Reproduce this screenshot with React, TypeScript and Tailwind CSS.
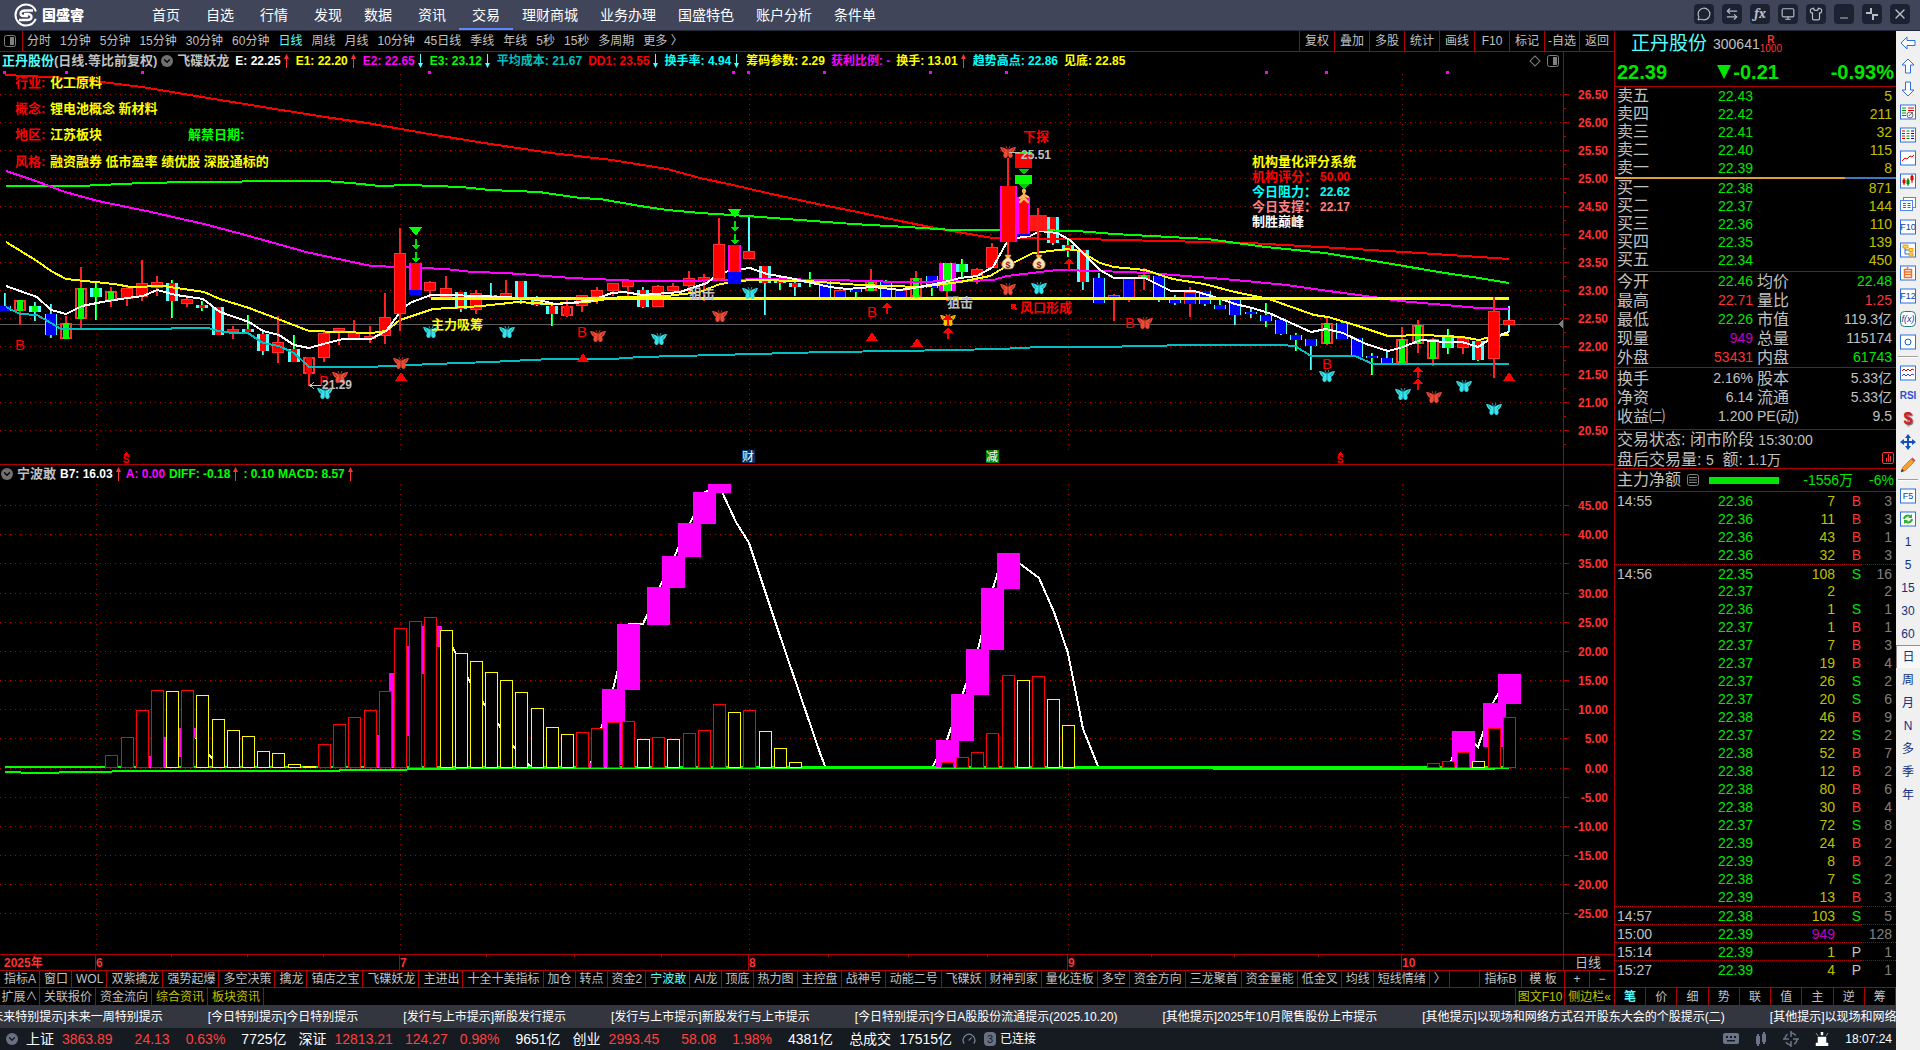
import { Fragment, ReactNode } from 'react';
import {
  ArrowLeftRight,
  ChevronDown,
  Gauge,
  MessageCircle,
  Minus,
  Monitor,
  Shirt,
  X,
} from 'lucide-react';

const navGroups = [
  ['首页', '自选', '行情', '发现'],
  ['数据', '资讯', '交易'],
  ['理财商城', '业务办理', '国盛特色', '账户分析', '条件单'],
];

const periods = [
  '分时', '1分钟', '5分钟', '15分钟', '30分钟', '60分钟', '日线', '周线', '月线', '10分钟',
  '45日线', '季线', '年线', '5秒', '15秒', '多周期', '更多 〉',
];

const chartTools = ['复权', '叠加', '多股', '统计', '画线', 'F10', '标记', '-自选', '返回'];

type Reading = { text: string; color: string; arrow?: 'up' | 'down' };

const mainReadings: Reading[] = [
  { text: 'E: 22.25', color: 'text-white', arrow: 'up' },
  { text: 'E1: 22.20', color: 'text-[#ffff00]', arrow: 'up' },
  { text: 'E2: 22.65', color: 'text-[#ff00ff]', arrow: 'down' },
  { text: 'E3: 23.12', color: 'text-[#00ff00]', arrow: 'down' },
  { text: '平均成本: 21.67', color: 'text-[#00c0c0]' },
  { text: 'DD1: 23.55', color: 'text-[#ff0000]', arrow: 'down' },
  { text: '换手率: 4.94', color: 'text-[#00ffff]', arrow: 'down' },
  { text: '筹码参数: 2.29', color: 'text-[#ffff00]' },
  { text: '获利比例: -', color: 'text-[#ff00ff]' },
  { text: '换手: 13.01', color: 'text-[#ffff00]', arrow: 'up' },
  { text: '趋势高点: 22.86', color: 'text-[#00ffff]' },
  { text: '见底: 22.85', color: 'text-[#ffff00]' },
];

const subReadings: Reading[] = [
  { text: 'B7: 16.03', color: 'text-white', arrow: 'up' },
  { text: 'A: 0.00', color: 'text-[#ff00ff]' },
  { text: 'DIFF: -0.18', color: 'text-[#00ff00]', arrow: 'up' },
  { text: ': 0.10', color: 'text-[#00ff00]' },
  { text: 'MACD: 8.57', color: 'text-[#00ff00]', arrow: 'up' },
];

// kind, high, low, body top, body bottom
type Candle = [string, number, number, number, number];

const candles: Candle[] = [
  ['cb', 293, 311, 306, 311], ['rg', 300, 325, 300, 311], ['cg', 302, 321, 306, 312], ['cb', 304, 338, 314, 335],
  ['rg', 316, 339, 323, 339], ['rg', 267, 328, 288, 319], ['cg', 283, 320, 288, 297], ['rg', 287, 307, 291, 301],
  ['r', 287, 306, 288, 299], ['r', 260, 301, 283, 297], ['r', 276, 296, 282, 288], ['c', 280, 318, 283, 301],
  ['r', 295, 307, 299, 304], ['c', 301, 311, 305, 308], ['c', 307, 335, 307, 335], ['r', 326, 339, 329, 332],
  ['c', 315, 333, 329, 332], ['c', 331, 355, 334, 351], ['r', 316, 363, 342, 353], ['c', 335, 362, 349, 362],
  ['rr', 357, 386, 357, 374], ['r', 330, 362, 333, 358], ['r', 328, 345, 328, 331], ['r', 320, 340, 332, 340],
  ['r', 326, 343, 336, 339], ['r', 293, 344, 317, 336], ['r', 228, 331, 253, 314], ['m', 263, 295, 263, 290],
  ['r', 281, 298, 282, 291], ['r', 276, 298, 288, 297], ['c', 292, 312, 292, 309], ['r', 290, 314, 293, 310],
  ['c', 283, 298, 295, 298], ['r', 280, 299, 293, 299], ['c', 281, 304, 281, 299], ['c', 296, 306, 297, 305],
  ['c', 302, 326, 306, 314], ['rr', 300, 317, 306, 316], ['r', 295, 312, 295, 306], ['r', 287, 304, 290, 297],
  ['r', 283, 296, 283, 291], ['r', 280, 297, 280, 287], ['c', 287, 308, 290, 307], ['r', 285, 307, 286, 307],
  ['r', 283, 292, 286, 291], ['r', 271, 292, 278, 286], ['r', 274, 301, 277, 281], ['r', 218, 281, 244, 279],
  ['m', 245, 284, 245, 272], ['t', 216, 259, 251, 259], ['c', 266, 315, 266, 283], ['c', 276, 290, 280, 283],
  ['c', 281, 296, 283, 287], ['c', 272, 287, 281, 283], ['cb', 280, 297, 280, 297], ['rb', 287, 300, 290, 297],
  ['cb', 288, 297, 289, 292], ['rg', 269, 291, 281, 291], ['cb', 280, 300, 281, 297], ['rb', 289, 297, 290, 297],
  ['rg', 271, 297, 278, 297], ['cb', 276, 296, 276, 288], ['my', 263, 301, 263, 291], ['cg', 259, 279, 264, 272],
  ['r', 268, 284, 269, 276], ['r', 243, 268, 247, 268], ['mw', 158, 255, 186, 242], ['m', 197, 236, 197, 234],
  ['rw', 208, 255, 215, 231], ['c', 217, 245, 217, 243], ['c', 240, 257, 245, 251], ['c', 250, 290, 250, 282],
  ['cb', 273, 303, 278, 303], ['rb', 294, 321, 295, 300], ['rb', 278, 302, 278, 299], ['rg', 268, 290, 275, 279],
  ['cb', 275, 302, 276, 299], ['cb', 295, 305, 299, 303], ['rb', 287, 317, 292, 304], ['cb', 291, 306, 291, 304],
  ['cb', 298, 309, 305, 309], ['cb', 300, 325, 300, 315], ['cb', 309, 318, 312, 314], ['cb', 303, 327, 315, 321],
  ['cb', 318, 335, 320, 334], ['cb', 333, 351, 335, 340], ['cb', 339, 370, 339, 346], ['rg', 318, 345, 323, 344],
  ['cb', 322, 339, 323, 339], ['cb', 338, 357, 338, 357], ['cb', 353, 375, 356, 358], ['cb', 352, 364, 358, 363],
  ['rg', 327, 363, 339, 363], ['rg', 320, 353, 325, 344], ['rg', 338, 366, 339, 359], ['cg', 329, 354, 335, 348],
  ['r', 336, 354, 338, 348], ['c', 341, 361, 341, 360], ['r', 297, 378, 311, 359], ['t', 306, 332, 320, 325],
];

const barX = (n: number) => Math.round(5 + n * 15.19);

const averages = [
  { color: '#00c0c0', points: '6,307 20,314 37,315 51,323 61,329 167,329 176,328 208,328 218,331 233,333 248,333 263,343 279,346 294,353 309,367 367,367 433,364 490,362 551,359 612,359 640,357 717,355 827,352 900,351 1000,349 1040,347 1100,347 1190,345 1280,345 1295,346 1311,356 1355,356 1373,364 1462,364 1509,364' },
  { color: '#ff0000', points: '5,75 70,78 142,87 202,97 269,108 325,117 367,123 429,134 484,143 551,153 612,160 667,169 700,178 733,185 767,193 813,203 867,214 900,221 940,229 993,238 1080,239 1163,241 1249,243 1338,248 1404,252 1509,259' },
  { color: '#00ff00', points: '6,186 80,186 143,183 192,182 294,181 324,181 351,183 380,186 408,185 461,187 490,190 539,192 580,198 600,199 640,206 667,210 700,213 747,216 800,220 853,224 907,227 953,230 1033,230 1077,231 1114,234 1207,239 1266,247 1325,253 1380,262 1445,273 1479,278 1509,283' },
  { color: '#ff00ff', points: '6,171 33,180 65,192 98,201 151,212 204,224 249,236 306,252 371,266 400,267 445,269 473,272 506,273 571,278 640,281 680,281 767,279 833,280 900,282 967,281 993,280 1007,276 1057,270 1100,271 1149,273 1235,280 1287,285 1314,289 1373,297 1400,301 1479,308 1509,309' },
  { color: '#ffff00', points: '6,242 37,261 51,271 66,279 114,284 131,287 163,286 204,292 220,299 249,308 278,319 309,331 371,333 386,331 400,320 433,309 482,306 518,302 551,304 588,302 620,297 667,296 700,292 720,284 750,280 807,281 860,285 920,287 960,282 990,276 1005,267 1033,253 1067,249 1080,251 1100,263 1114,267 1145,270 1173,279 1204,284 1235,292 1269,299 1314,315 1328,317 1355,325 1388,336 1424,335 1462,337 1479,340 1493,336 1509,335' },
  { color: '#ffffff', points: '6,286 20,291 37,297 51,310 66,314 82,306 102,302 127,298 143,296 157,290 176,295 203,299 220,312 249,322 263,331 279,335 294,345 309,348 327,343 343,339 371,339 386,331 404,307 412,302 431,295 449,295 506,297 539,300 555,304 571,303 592,300 612,293 624,292 643,295 680,292 707,283 713,278 728,271 750,268 767,274 790,278 830,287 847,289 873,287 900,290 913,288 940,283 960,278 977,276 993,267 1007,242 1017,238 1030,236 1040,231 1057,233 1070,240 1100,270 1114,278 1145,278 1171,291 1194,291 1218,298 1235,304 1252,308 1269,313 1311,332 1326,329 1343,333 1366,344 1388,351 1400,348 1421,340 1445,342 1462,342 1478,347 1493,337 1509,332' },
];

const butterflies = [
  ['#35e3ec', 431, 332], ['#35e3ec', 507, 332], ['#35e3ec', 325, 393], ['#35e3ec', 659, 339], ['#35e3ec', 750, 293],
  ['#35e3ec', 1039, 288], ['#35e3ec', 1327, 376], ['#35e3ec', 1403, 394], ['#35e3ec', 1464, 386], ['#35e3ec', 1494, 409],
  ['#f04a35', 340, 377], ['#f04a35', 401, 363], ['#f04a35', 598, 336], ['#f04a35', 720, 316], ['#f04a35', 1008, 289],
  ['#f04a35', 1145, 323], ['#f04a35', 1434, 397], ['#f04a35', 1008, 152], ['#ffc400', 948, 320],
] as const;

const notes = [
  { x: 15, y: 87, tag: '行业:', text: '化工原料' },
  { x: 15, y: 113, tag: '概念:', text: '锂电池概念 新材料' },
  { x: 15, y: 139, tag: '地区:', text: '江苏板块' },
  { x: 15, y: 166, tag: '风格:', text: '融资融券 低市盈率 绩优股 深股通标的' },
];

const scores = [
  { y: 166, label: '机构量化评分系统', value: '', color: '#ffff00' },
  { y: 181, label: '机构评分：', value: '50.00', color: '#ff0000' },
  { y: 196, label: '今日阻力：', value: '22.62', color: '#00ffff' },
  { y: 211, label: '今日支撑：', value: '22.17', color: '#ff8080' },
  { y: 226, label: '制胜巅峰', value: '', color: '#ffffff' },
];

// bar index, colour, top
const macdBars: [number, 'r' | 'y', number][] = [
  [7, 'r', 755], [8, 'r', 737], [9, 'r', 710], [10, 'r', 690], [11, 'y', 691], [12, 'r', 690], [13, 'y', 695],
  [14, 'y', 719], [15, 'y', 730], [16, 'y', 736], [17, 'y', 751], [18, 'y', 753], [19, 'y', 764], [20, 'y', 766],
  [21, 'r', 744], [22, 'r', 724], [23, 'r', 717], [24, 'r', 710], [25, 'r', 691], [26, 'r', 628], [27, 'r', 621],
  [28, 'r', 617], [29, 'y', 630], [30, 'y', 653], [31, 'y', 661], [32, 'y', 672], [33, 'y', 680], [34, 'y', 692],
  [35, 'y', 708], [36, 'y', 727], [37, 'y', 734], [38, 'r', 732], [39, 'r', 728], [40, 'r', 722], [41, 'r', 721],
  [42, 'y', 739], [43, 'r', 737], [44, 'y', 739], [45, 'r', 733], [46, 'r', 730], [47, 'r', 704], [48, 'y', 712],
  [49, 'r', 710], [50, 'y', 731], [51, 'y', 748], [52, 'y', 762], [62, 'r', 762], [63, 'r', 757], [64, 'r', 752],
  [65, 'r', 733], [66, 'r', 675], [67, 'y', 680], [68, 'r', 676], [69, 'y', 699], [70, 'y', 725], [94, 'r', 763],
  [95, 'r', 761], [96, 'r', 752], [97, 'y', 761], [98, 'r', 728], [99, 'r', 717],
];

// bar index, top, bottom
const surges = [
  [10, 756, 767], [11, 737, 757], [12, 728, 738], [25, 735, 767], [26, 673, 736], [27, 646, 674], [28, 626, 647],
  [39, 763, 767], [40, 689, 765], [41, 624, 690], [43, 587, 625], [44, 556, 588], [45, 523, 557], [46, 492, 524],
  [47, 484, 493], [62, 740, 767], [63, 694, 741], [64, 649, 695], [65, 588, 650], [66, 553, 589], [96, 731, 767],
  [98, 703, 747], [99, 674, 704],
];

const surgeLines = [
  '182,728 196,738 211,757 218,766',
  '430,626 438,627 453,648 469,680 484,704 499,725 514,747 530,766',
  '590,766 613,689 629,624 643,624 660,586 675,555 690,523 705,492 715,487 722,492 736,522 749,543 779,633 820,753 825,766',
  '933,766 947,740 963,693 978,649 993,588 1003,556 1019,563 1039,578 1054,612 1068,653 1083,729 1098,766',
  '1449,766 1463,732 1478,747 1493,703 1509,674',
];

const months = [
  { label: '6', x: 96 }, { label: '7', x: 400 }, { label: '8', x: 749 }, { label: '9', x: 1068 }, { label: '10', x: 1402 },
];

const indicatorTabs = [
  '指标A', '窗口', 'WOL', '双紫擒龙', '强势起爆', '多空决策', '擒龙', '镇店之宝', '飞碟妖龙', '主进出',
  '十全十美指标', '加仓', '转点', '资金2', '宁波敢', 'AI龙', '顶底', '热力图', '主控盘', '战神号', '动能二号',
  '飞碟妖', '财神到家', '量化连板', '多空', '资金方向', '三龙聚首', '资金量能', '低金叉', '均线', '短线情绪', '〉',
];

const sells = [['卖五', '22.43', '5'], ['卖四', '22.42', '211'], ['卖三', '22.41', '32'], ['卖二', '22.40', '115'], ['卖一', '22.39', '8']];
const buys = [['买一', '22.38', '871'], ['买二', '22.37', '144'], ['买三', '22.36', '110'], ['买四', '22.35', '139'], ['买五', '22.34', '450']];

const GREEN = 'text-[#00e600]';
const RED = 'text-[#ff3232]';
const GRAY = 'text-[#c0c0c0]';

const summary = [
  ['今开', '22.46', GREEN, '均价', '22.48', GREEN],
  ['最高', '22.71', RED, '量比', '1.25', RED],
  ['最低', '22.26', GREEN, '市值', '119.3亿', GRAY],
  ['现量', '949', 'text-[#c000c0]', '总量', '115174', GRAY],
  ['外盘', '53431', RED, '内盘', '61743', GREEN],
];

const capital = [
  ['换手', '2.16%', GRAY, '股本', '5.33亿', GRAY],
  ['净资', '6.14', GRAY, '流通', '5.33亿', GRAY],
  ['收益㈡', '1.200', GRAY, 'PE(动)', '9.5', GRAY],
];

const ticks = [
  ['14:55', '22.36', '7', 'B', '3'], ['', '22.36', '11', 'B', '3'], ['', '22.36', '43', 'B', '1'], ['', '22.36', '32', 'B', '3'],
  ['14:56', '22.35', '108', 'S', '16'], ['', '22.37', '2', '', '2'], ['', '22.36', '1', 'S', '1'], ['', '22.37', '1', 'B', '1'],
  ['', '22.37', '7', 'B', '3'], ['', '22.37', '19', 'B', '4'], ['', '22.37', '26', 'S', '2'], ['', '22.37', '20', 'S', '6'],
  ['', '22.38', '46', 'B', '9'], ['', '22.37', '22', 'S', '2'], ['', '22.38', '52', 'B', '7'], ['', '22.38', '12', 'B', '2'],
  ['', '22.38', '80', 'B', '6'], ['', '22.38', '30', 'B', '4'], ['', '22.37', '72', 'S', '8'], ['', '22.39', '24', 'B', '2'],
  ['', '22.39', '8', 'B', '2'], ['', '22.38', '7', 'S', '2'], ['', '22.39', '13', 'B', '3'], ['14:57', '22.38', '103', 'S', '5'],
  ['15:00', '22.39', '949', '', '128'], ['15:14', '22.39', '1', 'P', '1'], ['15:27', '22.39', '4', 'P', '1'],
];

const tickTabs = ['笔', '价', '细', '势', '联', '值', '主', '逆', '筹'];

const headlines = [
  '[未来特别提示]未来一周特别提示',
  '[今日特别提示]今日特别提示',
  '[发行与上市提示]新股发行提示',
  '[发行与上市提示]新股发行与上市提示',
  '[今日特别提示]今日A股股份流通提示(2025.10.20)',
  '[其他提示]2025年10月限售股份上市提示',
  '[其他提示]以现场和网络方式召开股东大会的个股提示(二)',
  '[其他提示]以现场和网络方式召开股东大会的个股提示(一)',
];

const indices = [
  ['上证', '3863.89', '24.13', '0.63%', '7725亿'],
  ['深证', '12813.21', '124.27', '0.98%', '9651亿'],
  ['创业', '2993.45', '58.08', '1.98%', '4381亿'],
];

function Logo() {
  return (
    <svg viewBox="0 0 24 24" className="h-6 w-6" fill="none" stroke="#fff">
      <circle cx="12" cy="12" r="10.5" strokeWidth="2" strokeDasharray="58 8" strokeDashoffset="-4" />
      <path d="M19 7.500H11.500C8 7.500 6.500 9 6.500 10.500S8 13 10 13H14" strokeWidth="2.400" />
      <path d="M5 17H12.500C16 17 17.500 15.500 17.500 14S16 11 14 11H10" strokeWidth="2.400" />
    </svg>
  );
}

function Header() {
  const tools: [string, ReactNode][] = [
    ['消息', <MessageCircle className="h-3.5 w-3.5" />],
    ['切换', <ArrowLeftRight className="h-3.5 w-3.5" />],
    ['公式', <span className="font-serif text-sm leading-none font-bold italic">fx</span>],
    ['屏幕', <Monitor className="h-3.5 w-3.5" />],
    ['皮肤', <Shirt className="h-3.5 w-3.5" />],
    ['最小化', <Minus className="mt-2 h-3 w-3" />],
    ['还原', (
      <svg viewBox="0 0 14 14" className="h-3.5 w-3.5" fill="none" stroke="currentColor" strokeWidth="2">
        <path d="M6 1v5H1M8 13V8h5" />
      </svg>
    )],
    ['关闭', <X className="h-4 w-4" />],
  ];
  return (
    <header className="flex h-[31px] items-center justify-between border-b border-[#23283a] bg-[#404559] pr-2.5 pl-3.5">
      <div className="flex h-full items-center">
        <Logo />
        <span className="ml-1 w-[110px] text-sm font-black text-white">国盛睿</span>
        <nav className="flex h-full gap-[22px] text-sm text-white">
          {navGroups.map((group, i) => (
            <div key={group[0]} className={`flex h-full ${i === 2 ? 'gap-[22px]' : 'gap-[26px]'}`}>
              {group.map((item) => (
                <a key={item} href="#" className="relative flex items-center">
                  {item}
                  {item === '交易' && <span className="absolute -right-[13px] bottom-0 -left-[13px] h-0.5 bg-[#5f86ff]" />}
                </a>
              ))}
            </div>
          ))}
        </nav>
      </div>
      <div className="mb-0.5 flex gap-2">
        {tools.map(([label, icon]) => (
          <button key={label} aria-label={label} className="flex h-5 w-5 items-center justify-center rounded bg-[#1b2232] text-[#b9bcc6]">
            {icon}
          </button>
        ))}
      </div>
    </header>
  );
}

function PanelIcon() {
  return (
    <svg viewBox="0 0 12 12" className="h-3 w-3">
      <rect x="0.5" y="0.5" width="11" height="11" rx="2" fill="none" stroke="#808080" />
      <rect x="6" y="2" width="4" height="8" fill="#808080" />
    </svg>
  );
}

function PeriodBar() {
  return (
    <div className="flex h-[21px] shrink-0 justify-between border-b border-[#b00000] text-xs text-[#c0c0c0]">
      <div className="flex items-center">
        <button aria-label="面板" className="flex h-full w-[23px] items-center border-r border-[#b00000] pl-1">
          <PanelIcon />
        </button>
        <div className="flex gap-[9px] pl-1">
          {periods.map((period) => (
            <button key={period} className={`whitespace-nowrap ${period === '日线' ? 'text-[#54ffff]' : ''}`}>
              {period}
            </button>
          ))}
        </div>
      </div>
      <div className="flex">
        {chartTools.map((tool) => (
          <button key={tool} className="w-[35px] border-l border-[#b00000] text-center whitespace-nowrap">
            {tool}
          </button>
        ))}
      </div>
    </div>
  );
}

function TrendArrow({ up }: { up: boolean }) {
  return up ? (
    <svg viewBox="0 0 7 14" className="ml-0.5 h-3.5 w-[7px]">
      <path d="M3.500 1v13" stroke="#ff3232" />
      <path d="M3.500 0 6 5H1z" fill="#ff3232" />
    </svg>
  ) : (
    <svg viewBox="0 0 7 14" className="ml-0.5 h-3.5 w-[7px]">
      <path d="M3.500 0v13" stroke="#54ffff" />
      <path d="M3.500 14 6 9H1z" fill="#54ffff" />
    </svg>
  );
}

function Readings({ items }: { items: Reading[] }) {
  return (
    <>
      {items.map((item) => (
        <span key={item.text} className={`flex items-center whitespace-nowrap ${item.color}`}>
          {item.text}
          {item.arrow && <TrendArrow up={item.arrow === 'up'} />}
        </span>
      ))}
    </>
  );
}

function DropButton() {
  return (
    <button aria-label="指标菜单" className="flex h-3 w-3 shrink-0 items-center justify-center rounded-full bg-[#707070] text-black">
      <ChevronDown className="h-2.5 w-2.5" strokeWidth={3} />
    </button>
  );
}

function CandleShape({ n, data }: { n: number; data: Candle }) {
  const [kind, high, low, top, bottom] = data;
  const x = barX(n);
  const h = Math.max(bottom - top, 2);
  const body = (w: number, fill: string) => <rect x={x - Math.floor(w / 2)} y={top} width={w} height={h} fill={fill} />;
  const hollow = <rect x={x - 5} y={top + 1} width="10" height={Math.max(h - 2, 1)} fill="#000" stroke="#ff3232" strokeWidth="2" />;
  const cyanWick = kind === 't';
  const greenWick = kind[0] === 'c';
  return (
    <g>
      <rect x={x - 1} y={high} width="2" height={low - high} fill={cyanWick ? '#54ffff' : greenWick ? '#00ff40' : '#ff2020'} />
      {greenWick && <rect x={x - 1} y={high} width="1" height={low - high} fill="#54ffff" />}
      {(kind === 'r' || kind === 't') && <>{body(12, '#ff3232')}<rect x={x - 5} y={top + 1} width="10" height={Math.max(h - 2, 1)} fill="#ff0000" /></>}
      {kind === 'rw' && body(17, '#ff1818')}
      {kind === 'c' && <>{body(12, '#54ffff')}{body(6, '#ff0000')}</>}
      {kind === 'cb' && <>{body(12, '#54ffff')}{body(10, '#0000ff')}</>}
      {kind === 'cg' && <>{body(12, '#54ffff')}{body(6, '#00ff00')}</>}
      {kind === 'rg' && <>{hollow}{body(6, '#00ff00')}</>}
      {kind === 'rr' && <>{hollow}{body(6, '#ff0000')}</>}
      {kind === 'rb' && <>{body(12, '#ff3232')}<rect x={x - 5} y={top + 1} width="10" height={h - 1} fill="#0000ff" /></>}
      {kind === 'm' && <>{body(13, '#ff00ff')}{body(9, '#ff0000')}<rect x={x - 6} y={bottom} width="13" height={low - bottom} fill="#0000ff" /></>}
      {kind === 'mw' && <>{body(17, '#ff00ff')}{body(13, '#ff0000')}</>}
      {kind === 'my' && <>{body(17, '#ff00ff')}{body(9, '#ffff00')}{body(7, '#00ff00')}</>}
    </g>
  );
}

function Butterfly({ x, y, color }: { x: number; y: number; color: string }) {
  return (
    <g transform={`translate(${x} ${y})`} fill={color}>
      <path d="M0-1C-2-4-5-5-8-5-7-2-6 0-4 1-5 3-5 5-3 6-1 6 0 4 0 3 0 4 1 6 3 6 5 5 5 3 4 1 6 0 7-2 8-5 5-5 2-4 0-1Z" />
      <path d="M0-1-2-6M0-1 2-6" stroke={color} strokeWidth="0.700" fill="none" />
      <path d="M0-1V4M-3 0-6-4M3 0 6-4" stroke="#000" strokeOpacity="0.350" fill="none" />
    </g>
  );
}

function MoneyBag({ x, y }: { x: number; y: number }) {
  return (
    <g transform={`translate(${x} ${y})`}>
      <path d="M-3-7H3L1.500-4C5-2 7 1 6 4 5 7 3 7 0 7S-5 7-6 4C-7 1-5-2-1.500-4Z" fill="#f7e3b0" stroke="#9a6a3a" strokeWidth="0.800" />
      <path d="M-3-7H3L1.500-4.500H-1.500Z" fill="#ffb020" />
      <text y="6" textAnchor="middle" fontSize="9" fontWeight="700" fill="#8a1c1c">$</text>
    </g>
  );
}

function UpArrow({ x, y }: { x: number; y: number }) {
  return (
    <g fill="#ff0000">
      <path d={`M${x} ${y}l5 6h-10z`} />
      <rect x={x - 1} y={y + 5} width="2" height="7" />
    </g>
  );
}

function FallSignal({ x, y }: { x: number; y: number }) {
  return (
    <g fill="#00e000">
      <path d={`M${x - 6} ${y}h13l-6 9z`} fill="#00ff00" />
      <path d={`M${x} ${y + 12}h2v6h3l-4 5-4-5h3zM${x} ${y + 25}h2v6h3l-4 5-4-5h3z`} />
    </g>
  );
}

function MonthLines({ from, to }: { from: number; to: number }) {
  return (
    <>
      {months.map((m) => (
        <path key={m.label} d={`M${m.x}.500 ${from}V${to}`} stroke="#a00000" strokeDasharray="1 4" />
      ))}
    </>
  );
}

function PriceChart() {
  const levels = Array.from({ length: 13 }, (_, i) => ({ price: (26.5 - i * 0.5).toFixed(2), y: Math.round(94 + i * 27.96) }));
  return (
    <svg viewBox="0 70 1614 395" className="block w-full" shapeRendering="crispEdges">
      {levels.map(({ price, y }) => (
        <g key={price}>
          <path d={`M0 ${y}.500H1563`} stroke="#b00000" strokeDasharray="1 4" />
          <path d={`M1563 ${y}.500h6M1563 ${y + 14}.500h3`} stroke="#b00000" />
          <text x="1608" y={y + 5} textAnchor="end" fontSize="12" fontWeight="700" fill="#ff3232">{price}</text>
        </g>
      ))}
      <MonthLines from={74} to={452} />
      <path d="M1563.500 70V465M0 464.500H1614" stroke="#b00000" />
      <path d="M0 324.500H1563" stroke="#606060" />
      <path d="M1558 324l5-4v8z" fill="#808080" />
      {[4, 66, 142, 429, 733, 748, 824, 930, 1006, 1266, 1326, 1447].map((x) => (
        <rect key={x} x={x - 1} y="71" width="3" height="3" fill="#ff00ff" />
      ))}

      {candles.map((data, n) => <CandleShape key={n} n={n} data={data} />)}
      {averages.map((line) => (
        <polyline key={line.color} points={line.points} fill="none" stroke={line.color} strokeWidth="2" />
      ))}
      <path d="M431 298.500H1509" stroke="#ffff00" strokeWidth="3" />
      {[26, 27, 47, 48, 66, 67, 68, 98].map((n) => <CandleShape key={n} n={n} data={candles[n]} />)}

      <FallSignal x={415} y={227} />
      <FallSignal x={734} y={209} />
      <rect x="1015" y="153" width="17" height="15" fill="#ff0000" />
      <rect x="1015" y="152" width="17" height="2" fill="#00ff00" />
      <path d="M1018 169h11l-5 6z" fill="#00c800" />
      <rect x="1015" y="175" width="17" height="9" fill="#00ff00" />
      <path d="M1018 184h11l-5 6z" fill="#00c800" />
      <g shapeRendering="auto" fill="none" stroke="#ffb45a" strokeWidth="2.500" strokeLinecap="round">
        <circle cx="1024" cy="191" r="1" />
        <path d="M1024 194v4l-4 4M1024 198l4 4M1020 198l4-3 4 2" />
      </g>

      <g fill="#ff0000">
        {[[401, 377], [583, 358], [872, 337], [917, 343], [1509, 377]].map(([x, y]) => (
          <path key={x} d={`M${x} ${y - 5}l6 9h-12z`} />
        ))}
      </g>
      {[[887, 302], [948, 327], [1069, 258], [1418, 366], [1418, 378]].map(([x, y]) => (
        <UpArrow key={`${x}-${y}`} x={x} y={y} />
      ))}
      <g shapeRendering="auto">
        {butterflies.map(([color, x, y]) => <Butterfly key={`${x}-${y}`} x={x} y={y} color={color} />)}
        <MoneyBag x={1008} y={262} />
        <MoneyBag x={1039} y={262} />
      </g>
      <UpArrow x={948} y={314} />

      <g fontSize="15" fill="#ff0000">
        {[[20, 350], [324, 386], [582, 337], [872, 317], [1130, 328], [1327, 369]].map(([x, y]) => (
          <text key={x} x={x} y={y} textAnchor="middle">B</text>
        ))}
      </g>
      <g fontSize="13" fontWeight="700">
        {notes.map((note) => (
          <Fragment key={note.tag}>
            <text x={note.x} y={note.y} fill="#ff0000">{note.tag}</text>
            <text x="50" y={note.y} fill="#ffff00">{note.text}</text>
          </Fragment>
        ))}
        <text x="188" y="139" fill="#00ff00">解禁日期:</text>
        {scores.map((row) => (
          <Fragment key={row.label}>
            <text x="1252" y={row.y} fill={row.color}>{row.label}</text>
            <text x="1320" y={row.y} fontSize="12" fill={row.color}>{row.value}</text>
          </Fragment>
        ))}
        <text x="431" y="329" fill="#ffff00">主力吸筹</text>
        <text x="689" y="298" fill="#c0c0c0">狙击</text>
        <text x="947" y="307" fill="#c0c0c0">狙击</text>
        <text x="1020" y="312" fill="#ff0000">风口形成</text>
        <text x="1023" y="141" fill="#ff0000">下探</text>
      </g>
      <path d="M1017 310l-5-5M1011.500 309v-4.500h4" stroke="#ff0000" strokeWidth="2" fill="none" />
      <g fontSize="12" fontWeight="700" fill="#c0c0c0">
        <text x="1021" y="159">25.51</text>
        <text x="322" y="389">21.29</text>
      </g>
      <path d="M310 385.500h11M314 382l-4 3.500 4 3.500M1009 152.500h11" stroke="#c0c0c0" fill="none" />

      <rect x="742" y="450" width="13" height="13" fill="#003366" />
      <rect x="986" y="450" width="13" height="13" fill="#008000" />
      <g fontSize="12" fill="#fff" textAnchor="middle">
        <text x="748" y="461">财</text>
        <text x="992" y="461">减</text>
      </g>
      {[126, 1340].map((x) => (
        <g key={x} fill="#ff0000">
          <path d={`M${x} 452l3 3h-6z`} />
          <text x={x} y="463" textAnchor="middle" fontSize="10" fontWeight="700">S</text>
        </g>
      ))}
    </svg>
  );
}

function MacdChart() {
  const levels = Array.from({ length: 15 }, (_, i) => ({ value: (45 - i * 5).toFixed(2), y: Math.round(505 + i * 29.17) }));
  return (
    <svg viewBox="0 482 1614 488" className="block w-full" shapeRendering="crispEdges">
      {levels.map(({ value, y }) => (
        <g key={value}>
          <path d={`M0 ${y}.500H1563`} stroke="#b00000" strokeDasharray="1 4" />
          <path d={`M1563 ${y}.500h6`} stroke="#b00000" />
          <text x="1608" y={y + 5} textAnchor="end" fontSize="12" fontWeight="700" fill="#ff3232">{value}</text>
        </g>
      ))}
      <MonthLines from={484} to={954} />
      <path d="M1563.500 482V970M0 954.500H1614" stroke="#b00000" />

      {surgeLines.map((points) => (
        <polyline key={points} points={points} fill="none" stroke="#fff" strokeWidth="2" />
      ))}
      <path d="M5 767H1509" stroke="#00ff00" strokeWidth="2" />
      <polyline points="5,772 36,773 82,772 143,771 339,771 340,770 400,770 415,769 500,768 1159,768 1266,769 1494,769 1495,768 1509,768" fill="none" stroke="#00ff00" strokeWidth="2" />
      {surges.map(([n, top, bottom]) => (
        <rect key={n} x={barX(n) - 11} y={top} width="23" height={bottom - top} fill="#ff00ff" />
      ))}
      {macdBars.map(([n, tone, top]) => (
        <rect
          key={n}
          x={barX(n) - 5.5}
          y={top + 0.5}
          width="12"
          height={Math.max(767 - top, 1)}
          fill="#000"
          stroke={tone === 'r' ? '#ff0000' : '#ffff00'}
        />
      ))}

      <g fontSize="12" fontWeight="700" fill="#ff3232">
        <text x="4" y="967">2025年</text>
        {months.map((m) => (
          <g key={m.label}>
            <path d={`M${m.x - 1}.500 954v16`} stroke="#b00000" />
            <text x={m.x} y="967">{m.label}</text>
          </g>
        ))}
      </g>
      {[171, 247, 323, 486, 574, 661, 828, 908, 987, 1151, 1234, 1318].map((x) => (
        <path key={x} d={`M${x}.500 954v3`} stroke="#b00000" />
      ))}
      <text x="1588" y="967" textAnchor="middle" fontSize="13" fill="#c0c0c0">日线</text>
    </svg>
  );
}

const tabCell = 'flex items-center border-r border-[#b00000] pr-[3px] pl-1 whitespace-nowrap';

function IndicatorTabs() {
  return (
    <div className="text-xs leading-4 text-[#c0c0c0]">
      <div className="flex h-[17px] justify-between border-t border-[#b00000]">
        <div className="flex min-w-0 overflow-hidden">
          {indicatorTabs.map((tab) => (
            <button key={tab} className={`${tabCell} ${tab === '宁波敢' ? 'text-[#54ffff]' : ''}`}>{tab}</button>
          ))}
        </div>
        <div className="flex shrink-0">
          <button className="w-[42px] border-l border-[#b00000]">指标B</button>
          <button className="w-[43px] border-l border-[#b00000]">模 板</button>
          <button className="w-[25px] border-l border-[#b00000]">+</button>
          <button className="w-[25px] border-l border-[#b00000]">−</button>
        </div>
      </div>
      <div className="flex h-[18px] justify-between border-t border-[#b00000]">
        <div className="flex">
          <button className="w-10 border-r border-[#b00000] whitespace-nowrap">扩展∧</button>
          <button className={tabCell}>关联报价</button>
          <button className={tabCell}>资金流向</button>
          <button className={`${tabCell} text-[#c0c000]`}>综合资讯</button>
          <button className={`${tabCell} text-[#c0c000]`}>板块资讯</button>
        </div>
        <div className="flex text-[#c0c000]">
          <button className="w-[49px] border-l border-[#b00000] whitespace-nowrap">图文F10</button>
          <button className="w-[50px] border-l border-[#b00000] whitespace-nowrap">侧边栏«</button>
        </div>
      </div>
    </div>
  );
}

function BookTable({ rows, label }: { rows: string[][]; label: string }) {
  return (
    <table aria-label={label} className="w-full table-fixed border-separate border-spacing-0">
      <tbody>
        {rows.map(([name, price, volume]) => (
          <tr key={name} className="h-[18px] leading-[18px]">
            <td className="w-[70px] pl-0.5 text-base leading-[18px] text-[#c0c0c0]">{name}</td>
            <td className={`w-[68px] text-right ${GREEN}`}>{price}</td>
            <td className="pr-1 text-right text-[#c0c000]">{volume}</td>
          </tr>
        ))}
      </tbody>
    </table>
  );
}

function PairTable({ rows, label }: { rows: string[][]; label: string }) {
  return (
    <table aria-label={label} className="w-full table-fixed border-separate border-spacing-0">
      <tbody>
        {rows.map(([nameA, valueA, colorA, nameB, valueB, colorB]) => (
          <tr key={nameA} className="h-[19px] leading-[19px]">
            <td className="w-[70px] pl-0.5 text-base leading-[19px] text-[#c0c0c0]">{nameA}</td>
            <td className={`w-[68px] text-right ${colorA}`}>{valueA}</td>
            <td className={`w-[64px] pl-1 leading-[19px] whitespace-nowrap text-[#c0c0c0] ${nameB.startsWith('PE') ? 'text-sm' : 'text-base'}`}>{nameB}</td>
            <td className={`pr-1 text-right whitespace-nowrap ${colorB}`}>{valueB}</td>
          </tr>
        ))}
      </tbody>
    </table>
  );
}

function TickTable() {
  return (
    <table aria-label="分笔成交" className="w-full table-fixed border-separate border-spacing-0">
      <tbody>
        {ticks.map(([time, price, volume, side, count], i) => {
          const edge = time && i > 0 ? 'h-[18px] border-t border-dotted border-[#b00000]' : 'h-[18px]';
          const sideColor = side === 'B' ? RED : side === 'S' ? GREEN : GRAY;
          return (
            <tr key={i} className="leading-4">
              <td className={`w-[70px] pl-0.5 text-[#c0c0c0] ${edge}`}>{time}</td>
              <td className={`w-[68px] text-right ${GREEN} ${edge}`}>{price}</td>
              <td className={`w-[82px] text-right ${volume === '949' ? 'text-[#c000c0]' : 'text-[#c0c000]'} ${edge}`}>{volume}</td>
              <td className={`w-[26px] text-right ${sideColor} ${edge}`}>{side}</td>
              <td className={`pr-1 text-right text-[#808080] ${edge}`}>{count}</td>
            </tr>
          );
        })}
      </tbody>
    </table>
  );
}

function QuotePanel() {
  return (
    <aside className="flex w-[282px] shrink-0 flex-col border-l border-[#b00000] bg-black text-sm">
      <div className="flex h-[26px] items-center pl-4">
        <h1 className="text-[19px] text-[#54ffff]">正丹股份</h1>
        <span className="ml-1.5 text-sm text-[#c0c0c0]">300641</span>
        <span className="flex flex-col items-center text-[10px] leading-[9px] text-[#ff3232]">
          <b>R</b>
          <span>1000</span>
        </span>
      </div>
      <div className={`grid h-[30px] grid-cols-3 items-center border-b border-[#b00000] px-0.5 text-xl font-bold ${GREEN}`}>
        <span>22.39</span>
        <span className="flex items-center">
          <svg viewBox="0 0 14 14" className="mr-0.5 ml-2 h-3.5 w-3.5"><path d="M0 0h14L7 14z" fill="#00e600" /></svg>
          -0.21
        </span>
        <span className="text-right">-0.93%</span>
      </div>
      <BookTable rows={sells} label="卖盘" />
      <div className="flex h-0.5">
        <span className="w-[82%] bg-[#e0a030]" />
        <span className="flex-1 bg-[#3c78c8]" />
      </div>
      <div className="border-b border-[#b00000] pb-0.5">
        <BookTable rows={buys} label="买盘" />
      </div>
      <div className="border-b border-[#b00000]">
        <PairTable rows={summary} label="行情" />
      </div>
      <div className="h-[62px] border-b border-[#b00000] pt-px">
        <PairTable rows={capital} label="股本" />
      </div>
      <div className="relative h-[39px] border-b border-[#b00000] pl-0.5 text-base leading-[19px] whitespace-nowrap text-[#c0c0c0]">
        <div>交易状态: 闭市阶段 <span className="text-sm">15:30:00</span></div>
        <div>盘后交易量: <span className="text-sm">5</span>&nbsp; 额: <span className="text-sm">1.1万</span></div>
        <button aria-label="盘后图" className="absolute right-0.5 bottom-1 flex h-3 w-3 items-end justify-center gap-px rounded-xs border border-[#ff3232] pb-px">
          <span className="h-1 w-px bg-[#ff3232]" />
          <span className="h-2 w-px bg-[#ff3232]" />
          <span className="h-1.5 w-px bg-[#ff3232]" />
        </button>
      </div>
      <div className={`flex h-[23px] shrink-0 items-center border-b border-[#b00000] px-0.5 ${GREEN}`}>
        <span className="text-base text-[#c0c0c0]">主力净额</span>
        <svg viewBox="0 0 12 12" className="ml-1.5 h-3 w-3" fill="none" stroke="#808080">
          <rect x="0.5" y="0.5" width="11" height="11" rx="2" />
          <path d="M2 3.500h8M2 6h8M2 8.500h8" />
        </svg>
        <span className="ml-2.5 h-[7px] w-[70px] bg-[#00e600]" />
        <span className="ml-auto">-1556万</span>
        <span className="ml-4">-6%</span>
      </div>
      <TickTable />
      <div className="mt-auto flex h-[18px] border-t border-[#b00000] text-xs text-[#c0c0c0]">
        {tickTabs.map((tab) => (
          <button key={tab} className={`flex-1 border-r border-[#b00000] ${tab === '笔' ? 'font-bold text-[#54ffff]' : ''}`}>{tab}</button>
        ))}
      </div>
    </aside>
  );
}

function Framed({ children, stroke = '#2f6fe0' }: { children: ReactNode; stroke?: string }) {
  return (
    <svg viewBox="0 0 16 16" className="h-4 w-4" fill="none">
      <rect x="0.5" y="1" width="15" height="14" fill="#fff" stroke={stroke} />
      {children}
    </svg>
  );
}

function FramedText({ text }: { text: string }) {
  return <Framed><text x="8" y="11" textAnchor="middle" fontSize="9" fill="#1040b0">{text}</text></Framed>;
}

const arrowPath = 'M1 8l6-6v3.500h8v5H7V14z';

const sideIcons: [string, ReactNode][] = [
  ['后退', <svg viewBox="0 0 16 16" className="h-4 w-4"><path d={arrowPath} fill="#fff" stroke="#2f6fe0" /></svg>],
  ['向上', <svg viewBox="0 0 16 16" className="h-4 w-4 rotate-90"><path d={arrowPath} fill="#fff" stroke="#2f6fe0" /></svg>],
  ['向下', <svg viewBox="0 0 16 16" className="h-4 w-4 -rotate-90"><path d={arrowPath} fill="#fff" stroke="#2f6fe0" /></svg>],
  ['自选编辑', <Framed><path d="M2 4h4M2 6.500h4M2 9h4M2 11.500h4" stroke="#009000" /><path d="M8 4h6M8 6.500h6" stroke="#e00000" /><circle cx="10" cy="11" r="3" fill="#eee" stroke="#707070" /><path d="M9 12l4-4" stroke="#707070" /></Framed>],
  ['报价表', <Framed><path d="M2 4h3M2 6.500h3M2 9h3M2 11.500h3" stroke="#e00000" /><path d="M6.500 4h3M6.500 6.500h3M6.500 9h3M6.500 11.500h3" stroke="#009000" /><path d="M11 4h3M11 6.500h3M11 9h3M11 11.500h3" stroke="#0000c0" /></Framed>],
  ['分时图', <Framed><path d="M2 11l3-3 2 1 3-3 2 1 2-2" stroke="#e00000" /></Framed>],
  ['K线图', <Framed><path d="M4 5v7M12 2v8" stroke="#e00000" /><path d="M8 5v8" stroke="#009000" /><path d="M3 7h2v3H3zM11 3h2v4h-2z" fill="#e00000" stroke="#e00000" /><path d="M7 7h2v4H7z" fill="#009000" stroke="#009000" /></Framed>],
  ['窗口', <svg viewBox="0 0 16 16" className="h-4 w-4" fill="#fff" stroke="#4f86e6"><rect x="3.500" y="1.500" width="12" height="10" /><rect x="0.500" y="4.500" width="12" height="10" /><path d="M3 7.500h3M7.500 7.500h3M3 9.500h3M7.500 9.500h3M3 11.500h3M7.500 11.500h3" stroke="#606060" /></svg>],
  ['F10', <FramedText text="F10" />],
  ['板块树', <Framed><path d="M5 6v6h4M5 8h4" stroke="#2f6fe0" /><path d="M3 3h5v3H3zM9 6.500h4v3H9zM9 11h4v3H9z" fill="#ffd050" stroke="#f0a000" /></Framed>],
  ['自选', <Framed><path d="M8 2l-1 2M4.500 4.500h7v8h-7zM4.500 7h7M4.500 9.500h7" stroke="#f07030" strokeWidth="1.500" /></Framed>],
  ['F12', <FramedText text="F12" />],
  ['公式', <svg viewBox="0 0 16 16" className="h-4 w-4"><rect x="0.500" y="0.500" width="15" height="15" rx="4" fill="#fff" stroke="#208080" /><text x="8" y="11" textAnchor="middle" fontSize="9" fontStyle="italic" fill="#1040b0">f(x)</text></svg>],
  ['画面', <Framed><circle cx="8" cy="8" r="3" stroke="#1060c0" /></Framed>],
];

const sideTools: [string, ReactNode][] = [
  ['多线', <Framed><path d="M2 6l2-2 2 2 2-2 2 2 2-2 2 1" stroke="#e00000" /><path d="M2 11l2-2 2 2 2-2 2 2 2-2 2 1" stroke="#2040e0" /></Framed>],
  ['RSI', <span className="text-[10px] font-bold text-[#3050d0]">RSI</span>],
  ['资金', <span className="text-base leading-none font-bold text-[#d02020] [text-shadow:1px_1px_1px_#606060]">$</span>],
  ['移动', <svg viewBox="0 0 16 16" className="h-4 w-4" fill="#1050c0"><path d="M8 0l3 4H9v3h3V5l4 3-4 3V9H9v3h2l-3 4-3-4h2V9H4v2L0 8l4-3v2h3V4H5z" /></svg>],
  ['画笔', <svg viewBox="0 0 16 16" className="h-4 w-4"><path d="M1 15l1.500-4.500L11 2l3 3-8.500 8.500z" fill="#f5a030" stroke="#a06010" strokeWidth="0.600" /><path d="M11 2l1.500-1.500 3 3L14 5z" fill="#d05050" /><path d="M1 15l1-3 2 2z" fill="#303030" /></svg>],
];

const sidePeriods = ['1', '5', '15', '30', '60', '日', '周', '月', 'N', '多', '季', '年'];

function SideBar() {
  const cell = 'flex h-[23px] w-full items-center justify-center';
  return (
    <aside className="w-6 shrink-0 bg-[#f0f0f0] text-xs text-[#103080]">
      {sideIcons.map(([label, icon]) => <button key={label} aria-label={label} className={cell}>{icon}</button>)}
      <div className="mx-0.5 my-[3px] h-0.5 border-b border-white bg-[#a0a0a0]" />
      {sideTools.map(([label, icon]) => <button key={label} aria-label={label} className={cell}>{icon}</button>)}
      <div className="mx-0.5 my-[3px] h-0.5 border-b border-white bg-[#a0a0a0]" />
      <button className={cell}><FramedText text="F5" /></button>
      <button aria-label="刷新" className={cell}>
        <Framed><path d="M4 8a4 4 0 0 1 7-2M12 8a4 4 0 0 1-7 2" stroke="#30b030" strokeWidth="2" /><path d="M12 3v4H8zM4 13V9h4z" fill="#30b030" /></Framed>
      </button>
      {sidePeriods.map((p) => (
        <button key={p} className={`${cell} ${p === '日' ? 'border-t border-l border-[#909090] bg-[#f8f8f8]' : ''}`}>{p}</button>
      ))}
    </aside>
  );
}

function StatusBar() {
  return (
    <footer className="flex h-[22px] items-center bg-[#151b20] pr-1 pl-1.5 text-sm leading-5 whitespace-nowrap text-white">
      <button aria-label="展开" className="flex h-3 w-3 items-center justify-center rounded-full bg-[#6a7080] text-[#151b20]">
        <ChevronDown className="h-2.5 w-2.5" strokeWidth={3} />
      </button>
      {indices.map(([name, value, change, percent, amount], i) => (
        <Fragment key={name}>
          <span className={i === 0 ? 'ml-2' : 'ml-3'}>{name}</span>
          <span className="ml-2 text-[#ff4040]">{value}</span>
          <span className={`text-[#ff4040] ${i === 1 ? 'ml-3' : 'ml-[22px]'}`}>{change}</span>
          <span className={`text-[#ff4040] ${i === 1 ? 'ml-3' : 'ml-4'}`}>{percent}</span>
          <span className="ml-4">{amount}</span>
        </Fragment>
      ))}
      <span className="ml-4">总成交</span>
      <span className="ml-2">17515亿</span>
      <Gauge className="ml-2.5 h-3.5 w-3.5 text-[#8088a0]" />
      <span className="ml-2 flex h-3.5 w-3 items-center justify-center rounded bg-[#6a7080] text-[11px] text-[#151b20]">3</span>
      <span className="ml-1 text-xs">已连接</span>
      <div className="ml-auto flex items-center gap-4 text-[#6a7488]">
        <svg viewBox="0 0 16 12" className="h-3 w-4" fill="currentColor">
          <rect width="16" height="11" rx="2" />
          <path d="M3 3h2v2H3zM7 3h2v2H7zM11 3h2v2h-2zM4 7h8v1.500H4z" fill="#151b20" />
        </svg>
        <svg viewBox="0 0 12 14" className="h-3.5 w-3" fill="currentColor">
          <path d="M1 4h4v8H1zM2 2h2v12H2zM7 2h4v8H7zM8 0h2v12H8z" />
        </svg>
        <svg viewBox="0 0 16 16" className="h-4 w-4" fill="none" stroke="currentColor" strokeWidth="1.500">
          <circle cx="8" cy="8" r="6" strokeDasharray="6 3" />
          <path d="M8 0v6M8 10v6M0 8h6M10 8h6" />
        </svg>
        <svg viewBox="0 0 14 14" className="h-3.5 w-3.5" fill="#fff">
          <path d="M3 5h8v6h2v3H1v-3h2zM6 0h2v3H6zM1 1l2 3M13 1l-2 3" stroke="#fff" strokeWidth="0.500" />
        </svg>
        <span className="text-xs text-white">18:07:24</span>
      </div>
    </footer>
  );
}

export default function App() {
  return (
    <div className="flex min-h-screen flex-col overflow-hidden bg-black font-['Liberation_Sans','Noto_Sans_CJK_SC',sans-serif]">
      <Header />
      <div className="flex flex-1">
        <div className="flex min-w-0 flex-1 flex-col">
          <div className="flex flex-1">
            <main className="flex min-w-0 flex-1 flex-col">
              <PeriodBar />
              <div className="flex h-[18px] text-xs font-bold">
                <div className="flex min-w-0 flex-1 items-center gap-1.5 pl-0.5">
                  <div className="flex items-center gap-1 text-[13px] whitespace-nowrap text-[#c0c0c0]">
                    <span><span className="text-[#54ffff]">正丹股份</span>(日线.等比前复权)</span>
                    <DropButton />
                    <span>飞碟妖龙</span>
                  </div>
                  <Readings items={mainReadings} />
                  <span className="ml-auto flex items-center gap-2 pr-1">
                    <span className="h-2 w-2 rotate-45 border border-[#808080]" />
                    <PanelIcon />
                  </span>
                </div>
                <div className="w-[51px] border-l border-[#b00000]" />
              </div>
              <PriceChart />
              <div className="flex h-[17px] text-xs font-bold">
                <div className="flex min-w-0 flex-1 items-center gap-1 pl-px">
                  <DropButton />
                  <span className="text-[13px] text-[#c0c0c0]">宁波敢</span>
                  <Readings items={subReadings} />
                </div>
                <div className="w-[51px] border-l border-[#b00000]" />
              </div>
              <MacdChart />
              <IndicatorTabs />
            </main>
            <QuotePanel />
          </div>
          <div className="flex h-[23px] justify-start overflow-hidden border-t border-[#b00000] bg-[#33363f] text-xs leading-[22px] whitespace-nowrap text-white">
            <div className="-ml-3 flex gap-[45px]">
              {headlines.map((text) => <a key={text} href="#">{text}</a>)}
            </div>
          </div>
          <StatusBar />
        </div>
        <SideBar />
      </div>
    </div>
  );
}
